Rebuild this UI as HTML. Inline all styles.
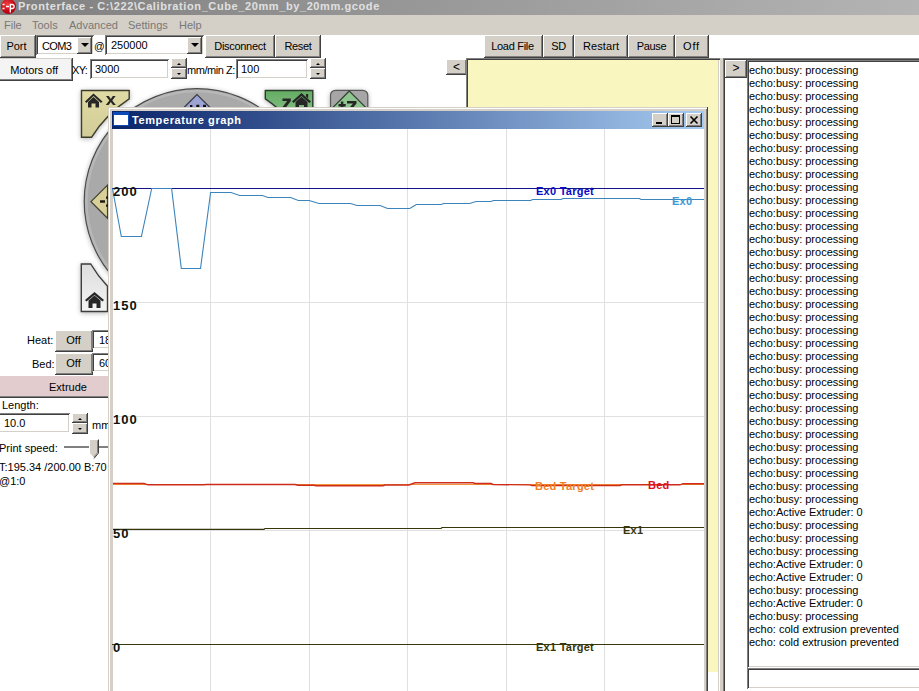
<!DOCTYPE html>
<html><head><meta charset="utf-8">
<style>
*{box-sizing:border-box;margin:0;padding:0}
html,body{width:919px;height:691px;overflow:hidden;background:#fff;font-family:"Liberation Sans",sans-serif;font-size:11px;color:#000;position:relative}
.a{position:absolute}
.btn{position:absolute;background:#d4d0c8;box-shadow:inset -1px -1px #404040,inset 1px 1px #fff,inset -2px -2px #808080;text-align:center;white-space:nowrap}
.fld{position:absolute;background:#fff;box-shadow:inset 1px 1px #808080,inset -1px -1px #fff,inset 2px 2px #404040,inset -2px -2px #d4d0c8;white-space:nowrap}
.up,.dn,.dd{position:absolute;width:0;height:0;border-left:3px solid transparent;border-right:3px solid transparent}
.up{border-bottom:2px solid #000;border-left-width:2px;border-right-width:2px}.dn{border-top:2px solid #000;border-left-width:2px;border-right-width:2px}.dd{border-left-width:4px;border-right-width:4px;border-top:4px solid #000}
.t{position:absolute;white-space:nowrap;line-height:13px}
.gt{font-weight:bold;color:#0c1410;letter-spacing:1px;font-size:13px}
.gl2{font-weight:bold;letter-spacing:0.25px}
</style></head><body>
<!-- title bar -->
<div class="a" style="left:0;top:0;width:919px;height:15px;background:linear-gradient(90deg,#808080,#b4b4b4)"></div>
<div class="a" style="left:1px;top:-1px;width:15px;height:15px;border-radius:50%;background:radial-gradient(circle at 40% 35%,#f04040,#c00010 60%,#900008)"></div>
<svg class="a" style="left:0;top:0" width="16" height="15"><path d="M2.5 4.5h2M2.5 8.5h2M6 6.5h3" stroke="#fff" stroke-width="1.4"/><path d="M10.3 12.5V4.5h1.8a2 2 0 0 1 0 4h-1.8" fill="none" stroke="#fff" stroke-width="1.3"/></svg>
<div class="t" style="left:18px;top:0px;font-weight:bold;font-size:11px;letter-spacing:0.6px;color:#e0e0e0;line-height:13px">Pronterface - C:\222\Calibration_Cube_20mm_by_20mm.gcode</div>
<!-- menu bar -->
<div class="a" style="left:0;top:15px;width:919px;height:20px;background:#d4d0c8"></div>
<div class="t" style="left:4px;top:19px;color:#787878">File</div>
<div class="t" style="left:32px;top:19px;color:#787878">Tools</div>
<div class="t" style="left:69px;top:19px;color:#787878">Advanced</div>
<div class="t" style="left:128px;top:19px;color:#787878">Settings</div>
<div class="t" style="left:179px;top:19px;color:#787878">Help</div>

<!-- row1 -->
<div class="btn" style="left:0;top:35px;width:36px;height:23px;line-height:22px;text-indent:-3px">Port</div>
<div class="fld" style="left:36px;top:35px;width:58px;height:20px"></div>
<div class="t" style="left:42px;top:40px;letter-spacing:-0.6px">COM3</div>
<div class="btn" style="left:77px;top:37px;width:15px;height:17px"></div><div class="dd" style="left:81px;top:43px"></div>
<div class="t" style="left:94px;top:40px;font-size:10.5px">@</div>
<div class="fld" style="left:105px;top:35px;width:99px;height:20px"></div>
<div class="t" style="left:111px;top:39px">250000</div>
<div class="btn" style="left:187px;top:37px;width:15px;height:17px"></div><div class="dd" style="left:191px;top:43px"></div>
<div class="btn" style="left:205px;top:35px;width:70px;height:23px;line-height:22px;letter-spacing:-0.3px">Disconnect</div>
<div class="btn" style="left:275px;top:35px;width:46px;height:23px;line-height:22px;letter-spacing:-0.3px">Reset</div>

<div class="btn" style="left:484px;top:35px;width:59px;height:23px;line-height:22px;letter-spacing:-0.3px;text-indent:-2px">Load File</div>
<div class="btn" style="left:543px;top:35px;width:31px;height:23px;line-height:22px;letter-spacing:-0.3px">SD</div>
<div class="btn" style="left:574px;top:35px;width:54px;height:23px;line-height:22px;letter-spacing:0.1px">Restart</div>
<div class="btn" style="left:628px;top:35px;width:47px;height:23px;line-height:22px;letter-spacing:-0.3px">Pause</div>
<div class="btn" style="left:675px;top:35px;width:34px;height:23px;line-height:22px;letter-spacing:0.8px;text-indent:-1px">Off</div>

<!-- row2 -->
<div class="btn" style="left:0;top:58px;width:73px;height:23px;line-height:24px;background:#f4f4f4;box-shadow:inset -1px -1px #404040,inset 0 1px #d4d0c8,inset -2px -2px #808080;text-indent:-5px;letter-spacing:-0.1px">Motors off</div>
<div class="t" style="left:72px;top:64px;letter-spacing:-0.6px">XY:</div>
<div class="fld" style="left:90px;top:59px;width:79px;height:20px"></div>
<div class="t" style="left:95px;top:63px">3000</div>
<div class="btn" style="left:171px;top:58px;width:16px;height:10px"></div><div class="up" style="left:177px;top:63px"></div>
<div class="btn" style="left:171px;top:68px;width:16px;height:11px"></div><div class="dn" style="left:177px;top:73px"></div>
<div class="t" style="left:187px;top:64px;letter-spacing:-0.45px">mm/min Z:</div>
<div class="fld" style="left:236px;top:59px;width:72px;height:20px"></div>
<div class="t" style="left:241px;top:63px">100</div>
<div class="btn" style="left:310px;top:58px;width:16px;height:10px"></div><div class="up" style="left:316px;top:63px"></div>
<div class="btn" style="left:310px;top:68px;width:16px;height:11px"></div><div class="dn" style="left:316px;top:73px"></div>

<!-- < button and yellow panel -->
<div class="btn" style="left:446px;top:59px;width:21px;height:16px;line-height:17px;font-size:12px">&lt;</div>
<div class="a" style="left:466px;top:58px;width:254px;height:640px;background:#fff;box-shadow:inset 1px 1px #808080,inset 2px 2px #404040,inset -1px -1px #fff,inset -2px -2px #d4d0c8"></div>
<div class="a" style="left:468px;top:60px;width:250px;height:612px;background:#f9f6c0"></div>
<div class="a" style="left:720px;top:58px;width:3px;height:633px;background:#d4d0c8"></div>

<!-- right panel -->
<div class="a" style="left:723px;top:58px;width:199px;height:640px;background:#fff;box-shadow:inset 1px 1px #808080,inset 2px 2px #404040"></div>
<div class="btn" style="left:725px;top:60px;width:22px;height:18px;line-height:17px;font-size:12px">&gt;</div>
<div class="fld" style="left:747px;top:60px;width:180px;height:608px"></div>
<div class="fld" style="left:747px;top:668px;width:180px;height:21px"></div>
<div id="log" class="a" style="left:749px;top:64px;line-height:13px">
echo:busy: processing<br>echo:busy: processing<br>echo:busy: processing<br>echo:busy: processing<br>echo:busy: processing<br>echo:busy: processing<br>echo:busy: processing<br>echo:busy: processing<br>echo:busy: processing<br>echo:busy: processing<br>echo:busy: processing<br>echo:busy: processing<br>echo:busy: processing<br>echo:busy: processing<br>echo:busy: processing<br>echo:busy: processing<br>echo:busy: processing<br>echo:busy: processing<br>echo:busy: processing<br>echo:busy: processing<br>echo:busy: processing<br>echo:busy: processing<br>echo:busy: processing<br>echo:busy: processing<br>echo:busy: processing<br>echo:busy: processing<br>echo:busy: processing<br>echo:busy: processing<br>echo:busy: processing<br>echo:busy: processing<br>echo:busy: processing<br>echo:busy: processing<br>echo:busy: processing<br>echo:busy: processing<br>echo:Active Extruder: 0<br>echo:busy: processing<br>echo:busy: processing<br>echo:busy: processing<br>echo:Active Extruder: 0<br>echo:Active Extruder: 0<br>echo:busy: processing<br>echo:Active Extruder: 0<br>echo:busy: processing<br>echo: cold extrusion prevented<br>echo: cold extrusion prevented
</div>

<!-- JOG AREA -->
<svg class="a" style="left:0;top:80px" width="470" height="300" viewBox="0 80 470 300">
<defs>
<filter id="sh" x="-20%" y="-20%" width="140%" height="140%"><feGaussianBlur in="SourceAlpha" stdDeviation="2.5"/><feOffset dx="0" dy="1"/><feComponentTransfer><feFuncA type="linear" slope="0.3"/></feComponentTransfer><feMerge><feMergeNode/><feMergeNode in="SourceGraphic"/></feMerge></filter>
<linearGradient id="kh" x1="0" y1="0" x2="0" y2="1"><stop offset="0" stop-color="#e0daa4"/><stop offset="1" stop-color="#d2cc98"/></linearGradient>
<linearGradient id="gr" x1="0" y1="0" x2="0" y2="1"><stop offset="0" stop-color="#64ac64"/><stop offset="1" stop-color="#8cc48c"/></linearGradient>
<linearGradient id="hm" x1="0" y1="0" x2="0" y2="1"><stop offset="0" stop-color="#dcdcdc"/><stop offset="1" stop-color="#f4f4f4"/></linearGradient>
</defs>
<g filter="url(#sh)">
<circle cx="197" cy="201.5" r="112.8" fill="#a9a9a9" stroke="#4c4c4c" stroke-width="1.2"/>
</g>
<circle cx="197" cy="201.5" r="110.6" fill="none" stroke="#bababa" stroke-width="2.5" opacity="0.8"/>
<path d="M197 94.5L184 107.5L210 107.5Z" fill="#9ca4d4" stroke="#3c3c48" stroke-width="1.2"/>
<path d="M190 105h2.4v2.2h-2.4zM196.3 104.8h3v2.4h-3zM203 104.8h3v2.4h-3z" fill="#111"/>
<path d="M91 201.7L107.5 185.2L107.5 218.2Z" fill="#d8d098" stroke="#404030" stroke-width="1.2"/>
<path d="M100 200.3h5v2.4h-5zM106 196.5h2v2.2h-2zM106 204.5h2v2.2h-2z" fill="#1c1c10"/>
<g filter="url(#sh)">
<path d="M81.5 90.5H129.2V98.9A123.3 123.3 0 0 0 91.7 137.2H81.5Z" fill="url(#kh)" stroke="#3c3c2c" stroke-width="1.4"/>
<path d="M265.3 90.5H312.8V120.5H290A123.3 123.3 0 0 0 265.3 98.8Z" fill="url(#gr)" stroke="#2c3c2c" stroke-width="1.4"/>
<rect x="330.5" y="90.3" width="37.3" height="24" rx="5" fill="#a6a6a6" stroke="#585858" stroke-width="1.2"/>
<path d="M81.3 264H90.7A123.3 123.3 0 0 0 107.5 286.3V311.5H81.3Z" fill="url(#hm)" stroke="#3c3c3c" stroke-width="1.4"/>
</g>
<path d="M349.3 91L331.5 108.8H367.1Z" fill="#90c490" stroke="#2c402c" stroke-width="1.2"/>
<!-- house icons -->
<g fill="#262626">
<path d="M85 101.5L93.5 93.5L102.5 101.5L101 103L93.5 96L86.5 103Z"/>
<path d="M88 102L93.5 97L99 102V107.5H95.5V103.5H91.5V107.5H88Z"/>
<path d="M106 96h2.8l2 3 2-3h2.8l-3.3 4.4 3.5 4.6h-2.8l-2.2-3.1-2.2 3.1h-2.8l3.5-4.6Z"/>
<path d="M85 300L94.5 292L104 300L102.5 301.5L94.5 295L86.5 301.5Z"/>
<path d="M88.5 300.5L94.5 295.5L100.5 300.5V308H96.5V303.5H92.5V308H88.5Z"/>
<path d="M282.5 98.5h8.3v2.4l-5 6.5h5.2V110h-8.8v-2.4l5-6.5h-4.7Z"/>
<path d="M292 101.5L301.5 93L311 101.5L309.3 103L301.5 96L293.7 103Z"/><path d="M306 94h2.2v4.5l-2.2-2Z"/>
<path d="M295.5 102L301.5 96.8L307.5 102V110H304V105H299V110H295.5Z"/>
<path d="M338.5 104h7.2v2.4h-7.2zM340.9 101.6h2.4v7.2h-2.4zM347 101h9.5v2.6l-5.5 6.5h-3.5l5.5-6.5H347Z"/>
</g>
</svg>

<!-- left controls -->
<div class="t" style="left:27px;top:334px">Heat:</div>
<div class="btn" style="left:55px;top:330px;width:38px;height:22px;line-height:20px;text-indent:-1px">Off</div>
<div class="fld" style="left:92px;top:330px;width:40px;height:19px"></div>
<div class="t" style="left:99px;top:334px">18</div>
<div class="t" style="left:32px;top:358px">Bed:</div>
<div class="btn" style="left:55px;top:353px;width:38px;height:22px;line-height:20px;text-indent:-1px">Off</div>
<div class="fld" style="left:92px;top:353px;width:40px;height:19px"></div>
<div class="t" style="left:99px;top:357px">60</div>
<div class="btn" style="left:-3px;top:376px;width:142px;height:22px;line-height:23px;background:#e2cccd;box-shadow:inset 0 -1px #404040,inset 0 -2px #808080">Extrude</div>
<div class="t" style="left:2px;top:399px">Length:</div>
<div class="fld" style="left:-2px;top:413px;width:72px;height:20px"></div>
<div class="t" style="left:4px;top:417px">10.0</div>
<div class="btn" style="left:72px;top:413px;width:16px;height:10px"></div><div class="up" style="left:78px;top:418px"></div>
<div class="btn" style="left:72px;top:423px;width:16px;height:11px"></div><div class="dn" style="left:78px;top:428px"></div>
<div class="t" style="left:92px;top:419px">mm</div>
<div class="t" style="left:-1px;top:442px">Print speed:</div>
<div class="a" style="left:64px;top:446px;width:60px;height:3px;background:#808080;border-bottom:1px solid #fff"></div>
<svg class="a" style="left:86px;top:437px" width="16" height="26"><path d="M3.5 2.5H12.5V16L8 21.5L3.5 16Z" fill="#d4d0c8" stroke="#fff" stroke-width="1"/><path d="M12.5 2.5V16L8 21.5" fill="none" stroke="#404040" stroke-width="1"/><path d="M11.5 3.5V15.6L8 20" fill="none" stroke="#808080" stroke-width="1"/></svg>
<div class="t" style="left:-1px;top:461px">T:195.34 /200.00 B:70</div>
<div class="t" style="left:-1px;top:475px">@1:0</div>

<!-- Temperature graph window -->
<div class="a" style="left:108px;top:107px;width:600px;height:600px;background:#d4d0c8;box-shadow:inset -1px -1px #404040,inset 1px 1px #d4d0c8,inset 2px 2px #fff,inset -2px -2px #808080"></div>
<div class="a" style="left:112px;top:111px;width:592px;height:18px;background:linear-gradient(90deg,#0a246a,#a6caf0)"></div>
<div class="a" style="left:113px;top:112px;width:16px;height:14px;background:#fff;border:1px solid #0c4ab8;border-top-width:3px"></div>
<div class="t" style="left:132px;top:114px;font-weight:bold;font-size:11px;letter-spacing:0.6px;color:#fff">Temperature graph</div>
<div class="btn" style="left:652px;top:113px;width:16px;height:14px"></div>
<div class="a" style="left:656px;top:122px;width:6px;height:2px;background:#000"></div>
<div class="btn" style="left:668px;top:113px;width:16px;height:14px"></div>
<div class="a" style="left:671px;top:115px;width:9px;height:9px;border:1px solid #000;border-top-width:2px"></div>
<div class="btn" style="left:686px;top:113px;width:16px;height:14px"></div>
<svg class="a" style="left:686px;top:113px" width="16" height="14"><path d="M4.5 3.5L11.5 10.5M11.5 3.5L4.5 10.5" stroke="#000" stroke-width="1.6"/></svg>
<div class="a" style="left:113px;top:129px;width:591px;height:570px;background:#fff"></div>
<svg class="a" style="left:112px;top:129px" width="592" height="562" viewBox="112 129 592 562">
<g stroke="#e0e0e0" stroke-width="1" fill="none">
<path d="M210.5 129V691M309.5 129V691M407.5 129V691M506.5 129V691M604.5 129V691"/>
<path d="M112 302.5H704M112 416.5H704M112 530.5H704M112 644.5H704"/>
</g>
<path d="M112 188.5H704" stroke="#12128a" stroke-width="1"/>
<polyline points="112.5,188.5 121.3,236.5 141.4,236.5 151.7,188.5 171.6,188.5 181.3,268.5 200.5,268.5 210.6,192.5 231,192.5 239.6,195.5 262.4,195.5 267.9,197.5 290.7,197.5 298.3,200.5 309.2,200.5 319,203.5 350.6,203.5 357,205.5 380,205.5 387.6,208.5 409.8,208.5 416.3,204.5 441.3,204.5 443.5,203.5 469.6,203.5 476,201.5 491,201.5 493.5,200.5 530.5,200.5 532.7,199.5 561,199.5 563,198.5 639.4,198.5 641,199.5 704,199.5" fill="none" stroke="#3c84bc" stroke-width="1.1"/>
<path d="M113 484.5H704" stroke="#f49438" stroke-width="1.2"/>
<polyline points="113,483.5 144,483.5 148,484.8 204,484.8 206,484.5 295,484.5 298,485.2 314,485.2 316,485.7 383,485.7 385,485 409,485 415,482.8 473,482.8 475,483.5 491,483.5 493,484.5 530,484.9 532,485.5 620,485.5 622,484.8 680,484.8 683,483.7 704,483.7" fill="none" stroke="#cc2c18" stroke-width="1.4"/>
<polyline points="113,529.3 264,529.3 265,528.5 441,528.5 442,527.5 704,527.5" fill="none" stroke="#36360c" stroke-width="1.2"/>
<path d="M112 644.5H704" stroke="#38380c" stroke-width="1"/>
</svg>
<div class="t gt" style="left:113px;top:185px">200</div>
<div class="t gt" style="left:113px;top:299px">150</div>
<div class="t gt" style="left:113px;top:413px">100</div>
<div class="t gt" style="left:113px;top:527px">50</div>
<div class="t gt" style="left:113px;top:641px">0</div>
<div class="t gl2" style="left:536px;top:185px;color:#0a0ac8">Ex0 Target</div>
<div class="t gl2" style="left:672px;top:195px;color:#3898d8">Ex0</div>
<div class="t gl2" style="left:535px;top:480px;color:#f08028">Bed Target</div>
<div class="t gl2" style="left:648px;top:479px;color:#e01020">Bed</div>
<div class="t gl2" style="left:623px;top:524px;color:#36360a">Ex1</div>
<div class="t gl2" style="left:536px;top:641px;color:#36360a">Ex1 Target</div>
</body></html>
